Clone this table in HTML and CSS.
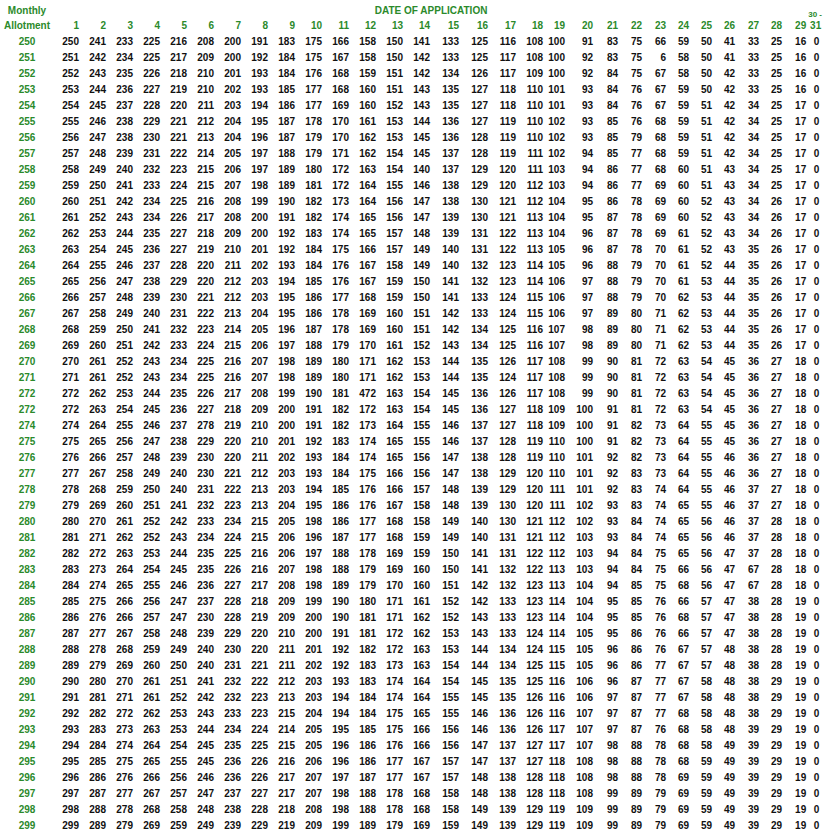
FILE: index.html
```html
<!DOCTYPE html>
<html>
<head>
<meta charset="utf-8">
<title>Allotment Proration Table</title>
<link rel="stylesheet" href="styles.css">
</head>
<body>
<table class="grid">
<colgroup>
<col class="w54">
<col class="w27"><col class="w27"><col class="w27"><col class="w27"><col class="w27"><col class="w27"><col class="w27">
<col class="w27"><col class="w27"><col class="w27"><col class="w27"><col class="w27"><col class="w27"><col class="w27">
<col class="w29"><col class="w29"><col class="w28"><col class="w27"><col class="w22"><col class="w28"><col class="w25">
<col class="w24"><col class="w24"><col class="w23"><col class="w23"><col class="w23"><col class="w24"><col class="w23">
<col class="w24"><col class="w20">
</colgroup>
<thead>
<tr class="h1"><th class="lab">Monthly</th><th colspan="29" class="title">DATE OF APPLICATION</th><th class="note">30 -</th></tr>
<tr class="h2"><th class="lab">Allotment</th><th>1</th><th>2</th><th>3</th><th>4</th><th>5</th><th>6</th><th>7</th><th>8</th><th>9</th><th>10</th><th>11</th><th>12</th><th>13</th><th>14</th><th>15</th><th>16</th><th>17</th><th>18</th><th>19</th><th>20</th><th>21</th><th>22</th><th>23</th><th>24</th><th>25</th><th>26</th><th>27</th><th>28</th><th>29</th><th class="end">31</th></tr>
</thead>
<tbody>
<tr><th class="lab">250</th><td>250</td><td>241</td><td>233</td><td>225</td><td>216</td><td>208</td><td>200</td><td>191</td><td>183</td><td>175</td><td>166</td><td>158</td><td>150</td><td>141</td><td>133</td><td>125</td><td>116</td><td>108</td><td>100</td><td>91</td><td>83</td><td>75</td><td>66</td><td>59</td><td>50</td><td>41</td><td>33</td><td>25</td><td>16</td><td>0</td></tr>
<tr><th class="lab">251</th><td>251</td><td>242</td><td>234</td><td>225</td><td>217</td><td>209</td><td>200</td><td>192</td><td>184</td><td>175</td><td>167</td><td>158</td><td>150</td><td>142</td><td>133</td><td>125</td><td>117</td><td>108</td><td>100</td><td>92</td><td>83</td><td>75</td><td>6</td><td>58</td><td>50</td><td>41</td><td>33</td><td>25</td><td>16</td><td>0</td></tr>
<tr><th class="lab">252</th><td>252</td><td>243</td><td>235</td><td>226</td><td>218</td><td>210</td><td>201</td><td>193</td><td>184</td><td>176</td><td>168</td><td>159</td><td>151</td><td>142</td><td>134</td><td>126</td><td>117</td><td>109</td><td>100</td><td>92</td><td>84</td><td>75</td><td>67</td><td>58</td><td>50</td><td>42</td><td>33</td><td>25</td><td>16</td><td>0</td></tr>
<tr><th class="lab">253</th><td>253</td><td>244</td><td>236</td><td>227</td><td>219</td><td>210</td><td>202</td><td>193</td><td>185</td><td>177</td><td>168</td><td>160</td><td>151</td><td>143</td><td>135</td><td>127</td><td>118</td><td>110</td><td>101</td><td>93</td><td>84</td><td>76</td><td>67</td><td>59</td><td>50</td><td>42</td><td>33</td><td>25</td><td>16</td><td>0</td></tr>
<tr><th class="lab">254</th><td>254</td><td>245</td><td>237</td><td>228</td><td>220</td><td>211</td><td>203</td><td>194</td><td>186</td><td>177</td><td>169</td><td>160</td><td>152</td><td>143</td><td>135</td><td>127</td><td>118</td><td>110</td><td>101</td><td>93</td><td>84</td><td>76</td><td>67</td><td>59</td><td>51</td><td>42</td><td>34</td><td>25</td><td>17</td><td>0</td></tr>
<tr><th class="lab">255</th><td>255</td><td>246</td><td>238</td><td>229</td><td>221</td><td>212</td><td>204</td><td>195</td><td>187</td><td>178</td><td>170</td><td>161</td><td>153</td><td>144</td><td>136</td><td>127</td><td>119</td><td>110</td><td>102</td><td>93</td><td>85</td><td>76</td><td>68</td><td>59</td><td>51</td><td>42</td><td>34</td><td>25</td><td>17</td><td>0</td></tr>
<tr><th class="lab">256</th><td>256</td><td>247</td><td>238</td><td>230</td><td>221</td><td>213</td><td>204</td><td>196</td><td>187</td><td>179</td><td>170</td><td>162</td><td>153</td><td>145</td><td>136</td><td>128</td><td>119</td><td>110</td><td>102</td><td>93</td><td>85</td><td>79</td><td>68</td><td>59</td><td>51</td><td>42</td><td>34</td><td>25</td><td>17</td><td>0</td></tr>
<tr><th class="lab">257</th><td>257</td><td>248</td><td>239</td><td>231</td><td>222</td><td>214</td><td>205</td><td>197</td><td>188</td><td>179</td><td>171</td><td>162</td><td>154</td><td>145</td><td>137</td><td>128</td><td>119</td><td>111</td><td>102</td><td>94</td><td>85</td><td>77</td><td>68</td><td>59</td><td>51</td><td>42</td><td>34</td><td>25</td><td>17</td><td>0</td></tr>
<tr><th class="lab">258</th><td>258</td><td>249</td><td>240</td><td>232</td><td>223</td><td>215</td><td>206</td><td>197</td><td>189</td><td>180</td><td>172</td><td>163</td><td>154</td><td>140</td><td>137</td><td>129</td><td>120</td><td>111</td><td>103</td><td>94</td><td>86</td><td>77</td><td>68</td><td>60</td><td>51</td><td>43</td><td>34</td><td>25</td><td>17</td><td>0</td></tr>
<tr><th class="lab">259</th><td>259</td><td>250</td><td>241</td><td>233</td><td>224</td><td>215</td><td>207</td><td>198</td><td>189</td><td>181</td><td>172</td><td>164</td><td>155</td><td>146</td><td>138</td><td>129</td><td>120</td><td>112</td><td>103</td><td>94</td><td>86</td><td>77</td><td>69</td><td>60</td><td>51</td><td>43</td><td>34</td><td>25</td><td>17</td><td>0</td></tr>
<tr><th class="lab">260</th><td>260</td><td>251</td><td>242</td><td>234</td><td>225</td><td>216</td><td>208</td><td>199</td><td>190</td><td>182</td><td>173</td><td>164</td><td>156</td><td>147</td><td>138</td><td>130</td><td>121</td><td>112</td><td>104</td><td>95</td><td>86</td><td>78</td><td>69</td><td>60</td><td>52</td><td>43</td><td>34</td><td>26</td><td>17</td><td>0</td></tr>
<tr><th class="lab">261</th><td>261</td><td>252</td><td>243</td><td>234</td><td>226</td><td>217</td><td>208</td><td>200</td><td>191</td><td>182</td><td>174</td><td>165</td><td>156</td><td>147</td><td>139</td><td>130</td><td>121</td><td>113</td><td>104</td><td>95</td><td>87</td><td>78</td><td>69</td><td>60</td><td>52</td><td>43</td><td>34</td><td>26</td><td>17</td><td>0</td></tr>
<tr><th class="lab">262</th><td>262</td><td>253</td><td>244</td><td>235</td><td>227</td><td>218</td><td>209</td><td>200</td><td>192</td><td>183</td><td>174</td><td>165</td><td>157</td><td>148</td><td>139</td><td>131</td><td>122</td><td>113</td><td>104</td><td>96</td><td>87</td><td>78</td><td>69</td><td>61</td><td>52</td><td>43</td><td>34</td><td>26</td><td>17</td><td>0</td></tr>
<tr><th class="lab">263</th><td>263</td><td>254</td><td>245</td><td>236</td><td>227</td><td>219</td><td>210</td><td>201</td><td>192</td><td>184</td><td>175</td><td>166</td><td>157</td><td>149</td><td>140</td><td>131</td><td>122</td><td>113</td><td>105</td><td>96</td><td>87</td><td>78</td><td>70</td><td>61</td><td>52</td><td>43</td><td>35</td><td>26</td><td>17</td><td>0</td></tr>
<tr><th class="lab">264</th><td>264</td><td>255</td><td>246</td><td>237</td><td>228</td><td>220</td><td>211</td><td>202</td><td>193</td><td>184</td><td>176</td><td>167</td><td>158</td><td>149</td><td>140</td><td>132</td><td>123</td><td>114</td><td>105</td><td>96</td><td>88</td><td>79</td><td>70</td><td>61</td><td>52</td><td>44</td><td>35</td><td>26</td><td>17</td><td>0</td></tr>
<tr><th class="lab">265</th><td>265</td><td>256</td><td>247</td><td>238</td><td>229</td><td>220</td><td>212</td><td>203</td><td>194</td><td>185</td><td>176</td><td>167</td><td>159</td><td>150</td><td>141</td><td>132</td><td>123</td><td>114</td><td>106</td><td>97</td><td>88</td><td>79</td><td>70</td><td>61</td><td>53</td><td>44</td><td>35</td><td>26</td><td>17</td><td>0</td></tr>
<tr><th class="lab">266</th><td>266</td><td>257</td><td>248</td><td>239</td><td>230</td><td>221</td><td>212</td><td>203</td><td>195</td><td>186</td><td>177</td><td>168</td><td>159</td><td>150</td><td>141</td><td>133</td><td>124</td><td>115</td><td>106</td><td>97</td><td>88</td><td>79</td><td>70</td><td>62</td><td>53</td><td>44</td><td>35</td><td>26</td><td>17</td><td>0</td></tr>
<tr><th class="lab">267</th><td>267</td><td>258</td><td>249</td><td>240</td><td>231</td><td>222</td><td>213</td><td>204</td><td>195</td><td>186</td><td>178</td><td>169</td><td>160</td><td>151</td><td>142</td><td>133</td><td>124</td><td>115</td><td>106</td><td>97</td><td>89</td><td>80</td><td>71</td><td>62</td><td>53</td><td>44</td><td>35</td><td>26</td><td>17</td><td>0</td></tr>
<tr><th class="lab">268</th><td>268</td><td>259</td><td>250</td><td>241</td><td>232</td><td>223</td><td>214</td><td>205</td><td>196</td><td>187</td><td>178</td><td>169</td><td>160</td><td>151</td><td>142</td><td>134</td><td>125</td><td>116</td><td>107</td><td>98</td><td>89</td><td>80</td><td>71</td><td>62</td><td>53</td><td>44</td><td>35</td><td>26</td><td>17</td><td>0</td></tr>
<tr><th class="lab">269</th><td>269</td><td>260</td><td>251</td><td>242</td><td>233</td><td>224</td><td>215</td><td>206</td><td>197</td><td>188</td><td>179</td><td>170</td><td>161</td><td>152</td><td>143</td><td>134</td><td>125</td><td>116</td><td>107</td><td>98</td><td>89</td><td>80</td><td>71</td><td>62</td><td>53</td><td>44</td><td>35</td><td>26</td><td>17</td><td>0</td></tr>
<tr><th class="lab">270</th><td>270</td><td>261</td><td>252</td><td>243</td><td>234</td><td>225</td><td>216</td><td>207</td><td>198</td><td>189</td><td>180</td><td>171</td><td>162</td><td>153</td><td>144</td><td>135</td><td>126</td><td>117</td><td>108</td><td>99</td><td>90</td><td>81</td><td>72</td><td>63</td><td>54</td><td>45</td><td>36</td><td>27</td><td>18</td><td>0</td></tr>
<tr><th class="lab">271</th><td>271</td><td>261</td><td>252</td><td>243</td><td>234</td><td>225</td><td>216</td><td>207</td><td>198</td><td>189</td><td>180</td><td>171</td><td>162</td><td>153</td><td>144</td><td>135</td><td>124</td><td>117</td><td>108</td><td>99</td><td>90</td><td>81</td><td>72</td><td>63</td><td>54</td><td>45</td><td>36</td><td>27</td><td>18</td><td>0</td></tr>
<tr><th class="lab">272</th><td>272</td><td>262</td><td>253</td><td>244</td><td>235</td><td>226</td><td>217</td><td>208</td><td>199</td><td>190</td><td>181</td><td>472</td><td>163</td><td>154</td><td>145</td><td>136</td><td>126</td><td>117</td><td>108</td><td>99</td><td>90</td><td>81</td><td>72</td><td>63</td><td>54</td><td>45</td><td>36</td><td>27</td><td>18</td><td>0</td></tr>
<tr><th class="lab">272</th><td>272</td><td>263</td><td>254</td><td>245</td><td>236</td><td>227</td><td>218</td><td>209</td><td>200</td><td>191</td><td>182</td><td>172</td><td>163</td><td>154</td><td>145</td><td>136</td><td>127</td><td>118</td><td>109</td><td>100</td><td>91</td><td>81</td><td>72</td><td>63</td><td>54</td><td>45</td><td>36</td><td>27</td><td>18</td><td>0</td></tr>
<tr><th class="lab">274</th><td>274</td><td>264</td><td>255</td><td>246</td><td>237</td><td>278</td><td>219</td><td>210</td><td>200</td><td>191</td><td>182</td><td>173</td><td>164</td><td>155</td><td>146</td><td>137</td><td>127</td><td>118</td><td>109</td><td>100</td><td>91</td><td>82</td><td>73</td><td>64</td><td>55</td><td>45</td><td>36</td><td>27</td><td>18</td><td>0</td></tr>
<tr><th class="lab">275</th><td>275</td><td>265</td><td>256</td><td>247</td><td>238</td><td>229</td><td>220</td><td>210</td><td>201</td><td>192</td><td>183</td><td>174</td><td>165</td><td>155</td><td>146</td><td>137</td><td>128</td><td>119</td><td>110</td><td>100</td><td>91</td><td>82</td><td>73</td><td>64</td><td>55</td><td>45</td><td>36</td><td>27</td><td>18</td><td>0</td></tr>
<tr><th class="lab">276</th><td>276</td><td>266</td><td>257</td><td>248</td><td>239</td><td>230</td><td>220</td><td>211</td><td>202</td><td>193</td><td>184</td><td>174</td><td>165</td><td>156</td><td>147</td><td>138</td><td>128</td><td>119</td><td>110</td><td>101</td><td>92</td><td>82</td><td>73</td><td>64</td><td>55</td><td>46</td><td>36</td><td>27</td><td>18</td><td>0</td></tr>
<tr><th class="lab">277</th><td>277</td><td>267</td><td>258</td><td>249</td><td>240</td><td>230</td><td>221</td><td>212</td><td>203</td><td>193</td><td>184</td><td>175</td><td>166</td><td>156</td><td>147</td><td>138</td><td>129</td><td>120</td><td>110</td><td>101</td><td>92</td><td>83</td><td>73</td><td>64</td><td>55</td><td>46</td><td>36</td><td>27</td><td>18</td><td>0</td></tr>
<tr><th class="lab">278</th><td>278</td><td>268</td><td>259</td><td>250</td><td>240</td><td>231</td><td>222</td><td>213</td><td>203</td><td>194</td><td>185</td><td>176</td><td>166</td><td>157</td><td>148</td><td>139</td><td>129</td><td>120</td><td>111</td><td>101</td><td>92</td><td>83</td><td>74</td><td>64</td><td>55</td><td>46</td><td>37</td><td>27</td><td>18</td><td>0</td></tr>
<tr><th class="lab">279</th><td>279</td><td>269</td><td>260</td><td>251</td><td>241</td><td>232</td><td>223</td><td>213</td><td>204</td><td>195</td><td>186</td><td>176</td><td>167</td><td>158</td><td>148</td><td>139</td><td>130</td><td>120</td><td>111</td><td>102</td><td>93</td><td>83</td><td>74</td><td>65</td><td>55</td><td>46</td><td>37</td><td>27</td><td>18</td><td>0</td></tr>
<tr><th class="lab">280</th><td>280</td><td>270</td><td>261</td><td>252</td><td>242</td><td>233</td><td>234</td><td>215</td><td>205</td><td>198</td><td>186</td><td>177</td><td>168</td><td>158</td><td>149</td><td>140</td><td>130</td><td>121</td><td>112</td><td>102</td><td>93</td><td>84</td><td>74</td><td>65</td><td>56</td><td>46</td><td>37</td><td>28</td><td>18</td><td>0</td></tr>
<tr><th class="lab">281</th><td>281</td><td>271</td><td>262</td><td>252</td><td>243</td><td>234</td><td>224</td><td>215</td><td>206</td><td>196</td><td>187</td><td>177</td><td>168</td><td>159</td><td>149</td><td>140</td><td>131</td><td>121</td><td>112</td><td>103</td><td>93</td><td>84</td><td>74</td><td>65</td><td>56</td><td>46</td><td>37</td><td>28</td><td>18</td><td>0</td></tr>
<tr><th class="lab">282</th><td>282</td><td>272</td><td>263</td><td>253</td><td>244</td><td>235</td><td>225</td><td>216</td><td>206</td><td>197</td><td>188</td><td>178</td><td>169</td><td>159</td><td>150</td><td>141</td><td>131</td><td>122</td><td>112</td><td>103</td><td>94</td><td>84</td><td>75</td><td>65</td><td>56</td><td>47</td><td>37</td><td>28</td><td>18</td><td>0</td></tr>
<tr><th class="lab">283</th><td>283</td><td>273</td><td>264</td><td>254</td><td>245</td><td>235</td><td>226</td><td>216</td><td>207</td><td>198</td><td>188</td><td>179</td><td>169</td><td>160</td><td>150</td><td>141</td><td>132</td><td>122</td><td>113</td><td>103</td><td>94</td><td>84</td><td>75</td><td>66</td><td>56</td><td>47</td><td>67</td><td>28</td><td>18</td><td>0</td></tr>
<tr><th class="lab">284</th><td>284</td><td>274</td><td>265</td><td>255</td><td>246</td><td>236</td><td>227</td><td>217</td><td>208</td><td>198</td><td>189</td><td>179</td><td>170</td><td>160</td><td>151</td><td>142</td><td>132</td><td>123</td><td>113</td><td>104</td><td>94</td><td>85</td><td>75</td><td>68</td><td>56</td><td>47</td><td>67</td><td>28</td><td>18</td><td>0</td></tr>
<tr><th class="lab">285</th><td>285</td><td>275</td><td>266</td><td>256</td><td>247</td><td>237</td><td>228</td><td>218</td><td>209</td><td>199</td><td>190</td><td>180</td><td>171</td><td>161</td><td>152</td><td>142</td><td>133</td><td>123</td><td>114</td><td>104</td><td>95</td><td>85</td><td>76</td><td>66</td><td>57</td><td>47</td><td>38</td><td>28</td><td>19</td><td>0</td></tr>
<tr><th class="lab">286</th><td>286</td><td>276</td><td>266</td><td>257</td><td>247</td><td>230</td><td>228</td><td>219</td><td>209</td><td>200</td><td>190</td><td>181</td><td>171</td><td>162</td><td>152</td><td>143</td><td>133</td><td>123</td><td>114</td><td>104</td><td>95</td><td>85</td><td>76</td><td>68</td><td>57</td><td>47</td><td>38</td><td>28</td><td>19</td><td>0</td></tr>
<tr><th class="lab">287</th><td>287</td><td>277</td><td>267</td><td>258</td><td>248</td><td>239</td><td>229</td><td>220</td><td>210</td><td>200</td><td>191</td><td>181</td><td>172</td><td>162</td><td>153</td><td>143</td><td>133</td><td>124</td><td>114</td><td>105</td><td>95</td><td>86</td><td>76</td><td>66</td><td>57</td><td>47</td><td>38</td><td>28</td><td>19</td><td>0</td></tr>
<tr><th class="lab">288</th><td>288</td><td>278</td><td>268</td><td>259</td><td>249</td><td>240</td><td>230</td><td>220</td><td>211</td><td>201</td><td>192</td><td>182</td><td>172</td><td>163</td><td>153</td><td>144</td><td>134</td><td>124</td><td>115</td><td>105</td><td>96</td><td>86</td><td>76</td><td>67</td><td>57</td><td>48</td><td>38</td><td>28</td><td>19</td><td>0</td></tr>
<tr><th class="lab">289</th><td>289</td><td>279</td><td>269</td><td>260</td><td>250</td><td>240</td><td>231</td><td>221</td><td>211</td><td>202</td><td>192</td><td>183</td><td>173</td><td>163</td><td>154</td><td>144</td><td>134</td><td>125</td><td>115</td><td>105</td><td>96</td><td>86</td><td>77</td><td>67</td><td>57</td><td>48</td><td>38</td><td>28</td><td>19</td><td>0</td></tr>
<tr><th class="lab">290</th><td>290</td><td>280</td><td>270</td><td>261</td><td>251</td><td>241</td><td>232</td><td>222</td><td>212</td><td>203</td><td>193</td><td>183</td><td>174</td><td>164</td><td>154</td><td>145</td><td>135</td><td>125</td><td>116</td><td>106</td><td>96</td><td>87</td><td>77</td><td>67</td><td>58</td><td>48</td><td>38</td><td>29</td><td>19</td><td>0</td></tr>
<tr><th class="lab">291</th><td>291</td><td>281</td><td>271</td><td>261</td><td>252</td><td>242</td><td>232</td><td>223</td><td>213</td><td>203</td><td>194</td><td>184</td><td>174</td><td>164</td><td>155</td><td>145</td><td>135</td><td>126</td><td>116</td><td>106</td><td>97</td><td>87</td><td>77</td><td>67</td><td>58</td><td>48</td><td>38</td><td>29</td><td>19</td><td>0</td></tr>
<tr><th class="lab">292</th><td>292</td><td>282</td><td>272</td><td>262</td><td>253</td><td>243</td><td>233</td><td>223</td><td>215</td><td>204</td><td>194</td><td>184</td><td>175</td><td>165</td><td>155</td><td>146</td><td>136</td><td>126</td><td>116</td><td>107</td><td>97</td><td>87</td><td>77</td><td>68</td><td>58</td><td>48</td><td>38</td><td>29</td><td>19</td><td>0</td></tr>
<tr><th class="lab">293</th><td>293</td><td>283</td><td>273</td><td>263</td><td>253</td><td>244</td><td>234</td><td>224</td><td>214</td><td>205</td><td>195</td><td>185</td><td>175</td><td>166</td><td>156</td><td>146</td><td>136</td><td>126</td><td>117</td><td>107</td><td>97</td><td>87</td><td>76</td><td>68</td><td>58</td><td>48</td><td>39</td><td>29</td><td>19</td><td>0</td></tr>
<tr><th class="lab">294</th><td>294</td><td>284</td><td>274</td><td>264</td><td>254</td><td>245</td><td>235</td><td>225</td><td>215</td><td>205</td><td>196</td><td>186</td><td>176</td><td>166</td><td>156</td><td>147</td><td>137</td><td>127</td><td>117</td><td>107</td><td>98</td><td>88</td><td>78</td><td>68</td><td>58</td><td>49</td><td>39</td><td>29</td><td>19</td><td>0</td></tr>
<tr><th class="lab">295</th><td>295</td><td>285</td><td>275</td><td>265</td><td>255</td><td>245</td><td>236</td><td>226</td><td>216</td><td>206</td><td>196</td><td>186</td><td>177</td><td>167</td><td>157</td><td>147</td><td>137</td><td>127</td><td>118</td><td>108</td><td>98</td><td>88</td><td>78</td><td>68</td><td>59</td><td>49</td><td>39</td><td>29</td><td>19</td><td>0</td></tr>
<tr><th class="lab">296</th><td>296</td><td>286</td><td>276</td><td>266</td><td>256</td><td>246</td><td>236</td><td>226</td><td>217</td><td>207</td><td>197</td><td>187</td><td>177</td><td>167</td><td>157</td><td>148</td><td>138</td><td>128</td><td>118</td><td>108</td><td>98</td><td>88</td><td>78</td><td>69</td><td>59</td><td>49</td><td>39</td><td>29</td><td>19</td><td>0</td></tr>
<tr><th class="lab">297</th><td>297</td><td>287</td><td>277</td><td>267</td><td>257</td><td>247</td><td>237</td><td>227</td><td>217</td><td>207</td><td>198</td><td>188</td><td>178</td><td>168</td><td>158</td><td>148</td><td>138</td><td>128</td><td>118</td><td>108</td><td>99</td><td>89</td><td>79</td><td>69</td><td>59</td><td>49</td><td>39</td><td>29</td><td>19</td><td>0</td></tr>
<tr><th class="lab">298</th><td>298</td><td>288</td><td>278</td><td>268</td><td>258</td><td>248</td><td>238</td><td>228</td><td>218</td><td>208</td><td>198</td><td>188</td><td>178</td><td>168</td><td>158</td><td>149</td><td>139</td><td>129</td><td>119</td><td>109</td><td>99</td><td>89</td><td>79</td><td>69</td><td>59</td><td>49</td><td>39</td><td>29</td><td>19</td><td>0</td></tr>
<tr><th class="lab">299</th><td>299</td><td>289</td><td>279</td><td>269</td><td>259</td><td>249</td><td>239</td><td>229</td><td>219</td><td>209</td><td>199</td><td>189</td><td>179</td><td>169</td><td>159</td><td>149</td><td>139</td><td>129</td><td>119</td><td>109</td><td>99</td><td>89</td><td>79</td><td>69</td><td>59</td><td>49</td><td>39</td><td>29</td><td>19</td><td>0</td></tr>
</tbody>
</table>
</body>
</html>
```

FILE: styles.css
```css
html, body {
  margin: 0;
  padding: 0;
  background: #ffffff;
}

body {
  font-family: "Liberation Sans", Arial, sans-serif;
  font-size: 10px;
  font-weight: bold;
  color: #111111;
}

.grid {
  table-layout: fixed;
  width: 828px;
  border-collapse: collapse;
  border-spacing: 0;
  margin-top: 3px;
}

.w54 { width: 54px; }
.w29 { width: 29px; }
.w28 { width: 28px; }
.w27 { width: 27px; }
.w25 { width: 25px; }
.w24 { width: 24px; }
.w23 { width: 23px; }
.w22 { width: 22px; }
.w20 { width: 20px; }

.grid th,
.grid td {
  padding: 0 2px 0 0;
  text-align: right;
  white-space: nowrap;
  font-weight: bold;
  height: 16px;
  line-height: 16px;
  vertical-align: middle;
}

.grid thead th {
  color: #2b8a2b;
}

.grid tr > :last-child {
  padding-right: 9px;
}

.grid .h2 .end {
  padding-right: 7px;
}

.grid .lab {
  text-align: center;
  padding: 0;
  color: #2b8a2b;
}

.h1 th {
  height: 15px;
  line-height: 15px;
}

.h1 .title {
  text-align: center;
  padding: 0;
}

.h1 .note {
  font-size: 8px;
  line-height: 7px;
  vertical-align: bottom;
  padding-right: 5px;
}

.grid td {
  color: #111111;
}
```
